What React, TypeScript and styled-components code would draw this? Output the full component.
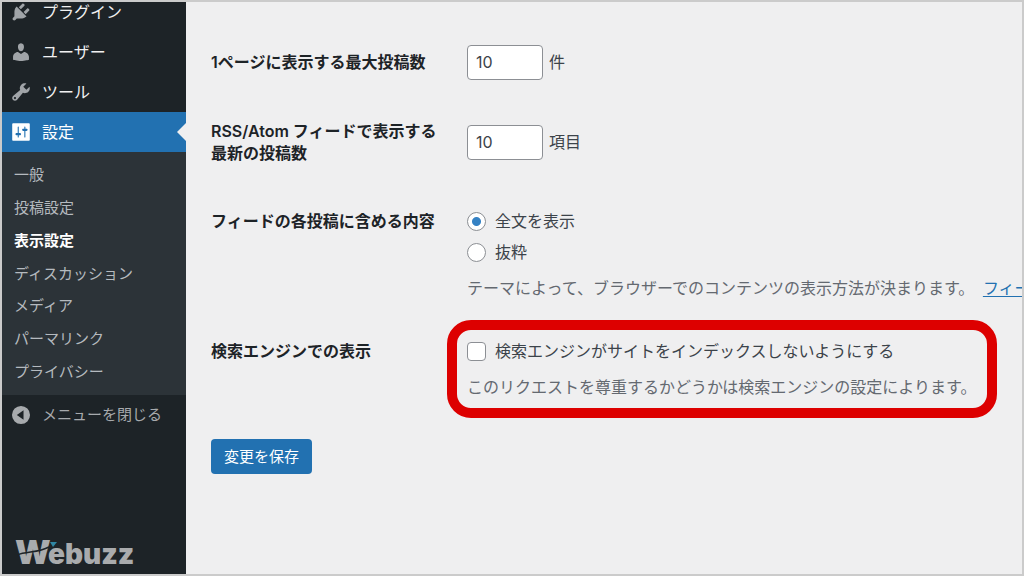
import React from 'react';
import styled, { createGlobalStyle } from 'styled-components';

const GlobalStyle = createGlobalStyle`
  *, *::before, *::after { box-sizing: border-box; }
  body {
    margin: 0;
    background: #f0f0f1;
    color: #3c434a;
    font-family: Inter, "Noto Sans CJK JP", sans-serif;
    font-size: 16px;
    line-height: 22px;
  }
  input, button { font: inherit; color: inherit; margin: 0; }
  ul { list-style: none; margin: 0; padding: 0; }
`;

const Frame = styled.div`
  display: flex;
  min-height: 100vh;
  border: 2px solid #cbcbcb;
  background: #efeff0;
  overflow: hidden;
`;

const Sidebar = styled.aside`
  flex: 0 0 184px;
  display: flex;
  flex-direction: column;
  background: #1d2327;
`;

const Menu = styled.nav`
  margin-top: -10px;
`;

const MenuLink = styled.a<{ $active?: boolean }>`
  position: relative;
  display: flex;
  align-items: center;
  gap: 10px;
  height: 40px;
  padding-left: 8px;
  color: ${p => (p.$active ? '#fff' : '#f0f0f1')};
  background: ${p => (p.$active ? '#2271b1' : 'transparent')};
  text-decoration: none;

  svg { fill: ${p => (p.$active ? '#fff' : '#a0a4a8')}; }

  &::after {
    content: '';
    display: ${p => (p.$active ? 'block' : 'none')};
    position: absolute;
    right: 0;
    top: 11px;
    width: 9px;
    height: 18px;
    background: #efeff0;
    clip-path: polygon(100% 0, 100% 100%, 0 50%);
  }
`;

const Icon = styled.svg`
  flex: none;
  width: 22px;
  height: 22px;
`;

const SubMenu = styled.ul`
  display: flex;
  flex-direction: column;
  min-height: 243px;
  padding: 7px 0;
  background: #2c3338;
`;

const SubItem = styled.li`
  flex: 1;
  display: flex;
  align-items: center;
`;

const SubLink = styled.a<{ $current?: boolean }>`
  padding-left: 12px;
  font-size: 15px;
  color: ${p => (p.$current ? '#fff' : '#b5babf')};
  font-weight: ${p => (p.$current ? 700 : 400)};
  text-decoration: none;
`;

const CollapseButton = styled.button`
  display: flex;
  align-items: center;
  gap: 10px;
  width: 100%;
  height: 40px;
  padding: 0 0 0 8px;
  border: 0;
  background: none;
  color: #a7aaad;
  font-size: 15px;
  text-align: left;

  svg { fill: #a7aaad; }
`;

const Logo = styled.svg`
  width: 124px;
  height: 32px;
  margin: auto 0 4px 12px;
`;

const Content = styled.main`
  flex: 1;
  min-width: 0;
  padding: 20px 25px 40px;
  overflow: hidden;
`;

const Row = styled.div<{ $start?: boolean }>`
  display: grid;
  grid-template-columns: 232px minmax(0, 1fr);
  column-gap: 24px;
  align-items: ${p => (p.$start ? 'start' : 'center')};
  min-height: 80px;
  padding: ${p => (p.$start ? '28px 0 13px' : '0')};
`;

const Heading = styled.label`
  color: #1d2327;
  font-weight: 600;
`;

const Field = styled.div`
  display: flex;
  align-items: center;
  gap: 6px;
`;

const NumberInput = styled.input`
  width: 76px;
  height: 35px;
  padding: 0 8px;
  border: 1px solid #8c8f94;
  border-radius: 4px;
  background: #fff;
  appearance: none;
  outline: none;
`;

const Options = styled.div`
  position: relative;
  display: flex;
  flex-direction: column;
  gap: 9px;
`;

const Highlight = styled.span`
  position: absolute;
  inset: -20px 0 -20px -20px;
  border: 10px solid #dd0000;
  border-radius: 24px;
  pointer-events: none;
`;

const Option = styled.label`
  display: flex;
  align-items: center;
  gap: 9px;
  white-space: nowrap;
`;

const Choice = styled.input`
  appearance: none;
  flex: none;
  width: 19px;
  height: 19px;
  border: 1px solid #8c8f94;
  border-radius: ${p => (p.type === 'radio' ? '50%' : '4px')};
  background: #fff;

  &[type='radio']:checked {
    background: radial-gradient(circle, #3582c4 4px, #fff 5px);
  }
`;

const Description = styled.p`
  margin: 5px 0 0;
  color: #646970;
  white-space: nowrap;

  a {
    margin-left: 4px;
    color: #2271b1;
    text-underline-offset: 2px;
  }
`;

const SaveButton = styled.button`
  height: 35px;
  margin-top: 28px;
  padding: 0 13px;
  border: 0;
  border-radius: 4px;
  background: #2271b1;
  color: #fff;
  font-size: 15px;
`;

const menu = [
  {
    label: 'プラグイン',
    d: 'M13.11 4.36L9.87 7.6 8 5.73l3.24-3.24c.35-.34 1.05-.2 1.56.32.52.51.66 1.21.31 1.55zm-8 1.77l.91-1.12 9.01 9.01-1.19.84c-.71.71-2.63 1.16-3.82 1.16H6.14L4.9 17.26c-.59.59-1.54.59-2.12 0-.59-.58-.59-1.53 0-2.12l1.24-1.24v-3.88c0-1.13.4-3.19 1.09-3.89zm7.26 3.97l3.24-3.24c.34-.35 1.04-.21 1.55.31.52.51.66 1.21.31 1.55l-3.24 3.25z',
  },
  {
    label: 'ユーザー',
    d: 'M10 9.25c-2.27 0-2.73-3.44-2.73-3.44C7 4.02 7.82 2 9.97 2c2.16 0 2.98 2.02 2.71 3.81 0 0-.41 3.44-2.68 3.44zm0 2.57L12.72 10c2.39 0 4.52 2.33 4.52 4.53v2.49s-3.65 1.13-7.24 1.13c-3.65 0-7.24-1.13-7.24-1.13v-2.49c0-2.25 1.94-4.48 4.47-4.48z',
  },
  {
    label: 'ツール',
    d: 'M16.68 9.77c-1.34 1.34-3.3 1.67-4.95.99l-5.41 6.52c-.99.99-2.59.99-3.58 0s-.99-2.59 0-3.57l6.52-5.42c-.68-1.65-.35-3.61.99-4.95 1.28-1.28 3.12-1.62 4.72-1.06l-2.89 2.89 2.82 2.82 2.86-2.87c.53 1.58.18 3.39-1.08 4.65zM3.81 16.21c.4.39 1.04.39 1.43 0 .4-.4.4-1.04 0-1.43-.39-.4-1.03-.4-1.43 0-.39.39-.39 1.03 0 1.43z',
  },
  {
    label: '設定',
    active: true,
    d: 'M18 17V3c0-.55-.45-1-1-1H3c-.55 0-1 .45-1 1v14c0 .55.45 1 1 1h14c.55 0 1-.45 1-1zM8 11h1c.55 0 1 .45 1 1s-.45 1-1 1H8v1.5c0 .28-.22.5-.5.5s-.5-.22-.5-.5V13H6c-.55 0-1-.45-1-1s.45-1 1-1h1V5.5c0-.28.22-.5.5-.5s.5.22.5.5V11zm5-2h-1c-.55 0-1-.45-1-1s.45-1 1-1h1V5.5c0-.28.22-.5.5-.5s.5.22.5.5V7h1c.55 0 1 .45 1 1s-.45 1-1 1h-1v5.5c0 .28-.22.5-.5.5s-.5-.22-.5-.5V9z',
  },
];

const subMenu = ['一般', '投稿設定', '表示設定', 'ディスカッション', 'メディア', 'パーマリンク', 'プライバシー'];

export default function App() {
  return (
    <>
      <GlobalStyle />
      <Frame>
        <Sidebar>
          <Menu>
            {menu.map(item => (
              <MenuLink key={item.label} href="#" $active={item.active}>
                <Icon viewBox="0 0 20 20" aria-hidden="true">
                  <path d={item.d} />
                </Icon>
                {item.label}
              </MenuLink>
            ))}
            <SubMenu>
              {subMenu.map(label => (
                <SubItem key={label}>
                  <SubLink href="#" $current={label === '表示設定'}>{label}</SubLink>
                </SubItem>
              ))}
            </SubMenu>
          </Menu>
          <CollapseButton type="button">
            <Icon viewBox="0 0 20 20" aria-hidden="true">
              <path fillRule="evenodd" d="M10 1.8a8.2 8.2 0 1 0 0 16.4 8.2 8.2 0 0 0 0-16.4zM12.3 5.6v8.8L6.2 10z" />
            </Icon>
            メニューを閉じる
          </CollapseButton>
          <Logo viewBox="0 0 124 32" role="img" aria-label="Webuzz">
            <g fill="#a9abad" fontFamily="Inter, sans-serif">
              <text x="1" y="26" fontSize="33" fontWeight="900">W</text>
              <text x="34" y="26" fontSize="28" fontWeight="900">ebuzz</text>
            </g>
            <path d="M3 17C13 13 24 15 35 9" fill="none" stroke="#1d2327" strokeWidth="1.5" />
            <path d="M36 4h7l-4 5z" fill="#2f86a3" />
          </Logo>
        </Sidebar>
        <Content>
          <form onSubmit={e => e.preventDefault()}>
            <Row>
              <Heading htmlFor="posts">1ページに表示する最大投稿数</Heading>
              <Field>
                <NumberInput id="posts" type="text" inputMode="numeric" defaultValue="10" />
                件
              </Field>
            </Row>
            <Row>
              <Heading htmlFor="feed-items">RSS/Atom フィードで表示する最新の投稿数</Heading>
              <Field>
                <NumberInput id="feed-items" type="text" inputMode="numeric" defaultValue="10" />
                項目
              </Field>
            </Row>
            <Row $start>
              <Heading as="span" id="feed-content">フィードの各投稿に含める内容</Heading>
              <Options role="radiogroup" aria-labelledby="feed-content">
                <Option>
                  <Choice type="radio" name="feed" defaultChecked />
                  全文を表示
                </Option>
                <Option>
                  <Choice type="radio" name="feed" />
                  抜粋
                </Option>
                <Description>
                  テーマによって、ブラウザーでのコンテンツの表示方法が決まります。 <a href="#">フィー</a>
                </Description>
              </Options>
            </Row>
            <Row $start>
              <Heading as="span" id="visibility">検索エンジンでの表示</Heading>
              <Options role="group" aria-labelledby="visibility">
                <Option>
                  <Choice type="checkbox" />
                  検索エンジンがサイトをインデックスしないようにする
                </Option>
                <Description>このリクエストを尊重するかどうかは検索エンジンの設定によります。</Description>
                <Highlight />
              </Options>
            </Row>
            <SaveButton type="submit">変更を保存</SaveButton>
          </form>
        </Content>
      </Frame>
    </>
  );
}
